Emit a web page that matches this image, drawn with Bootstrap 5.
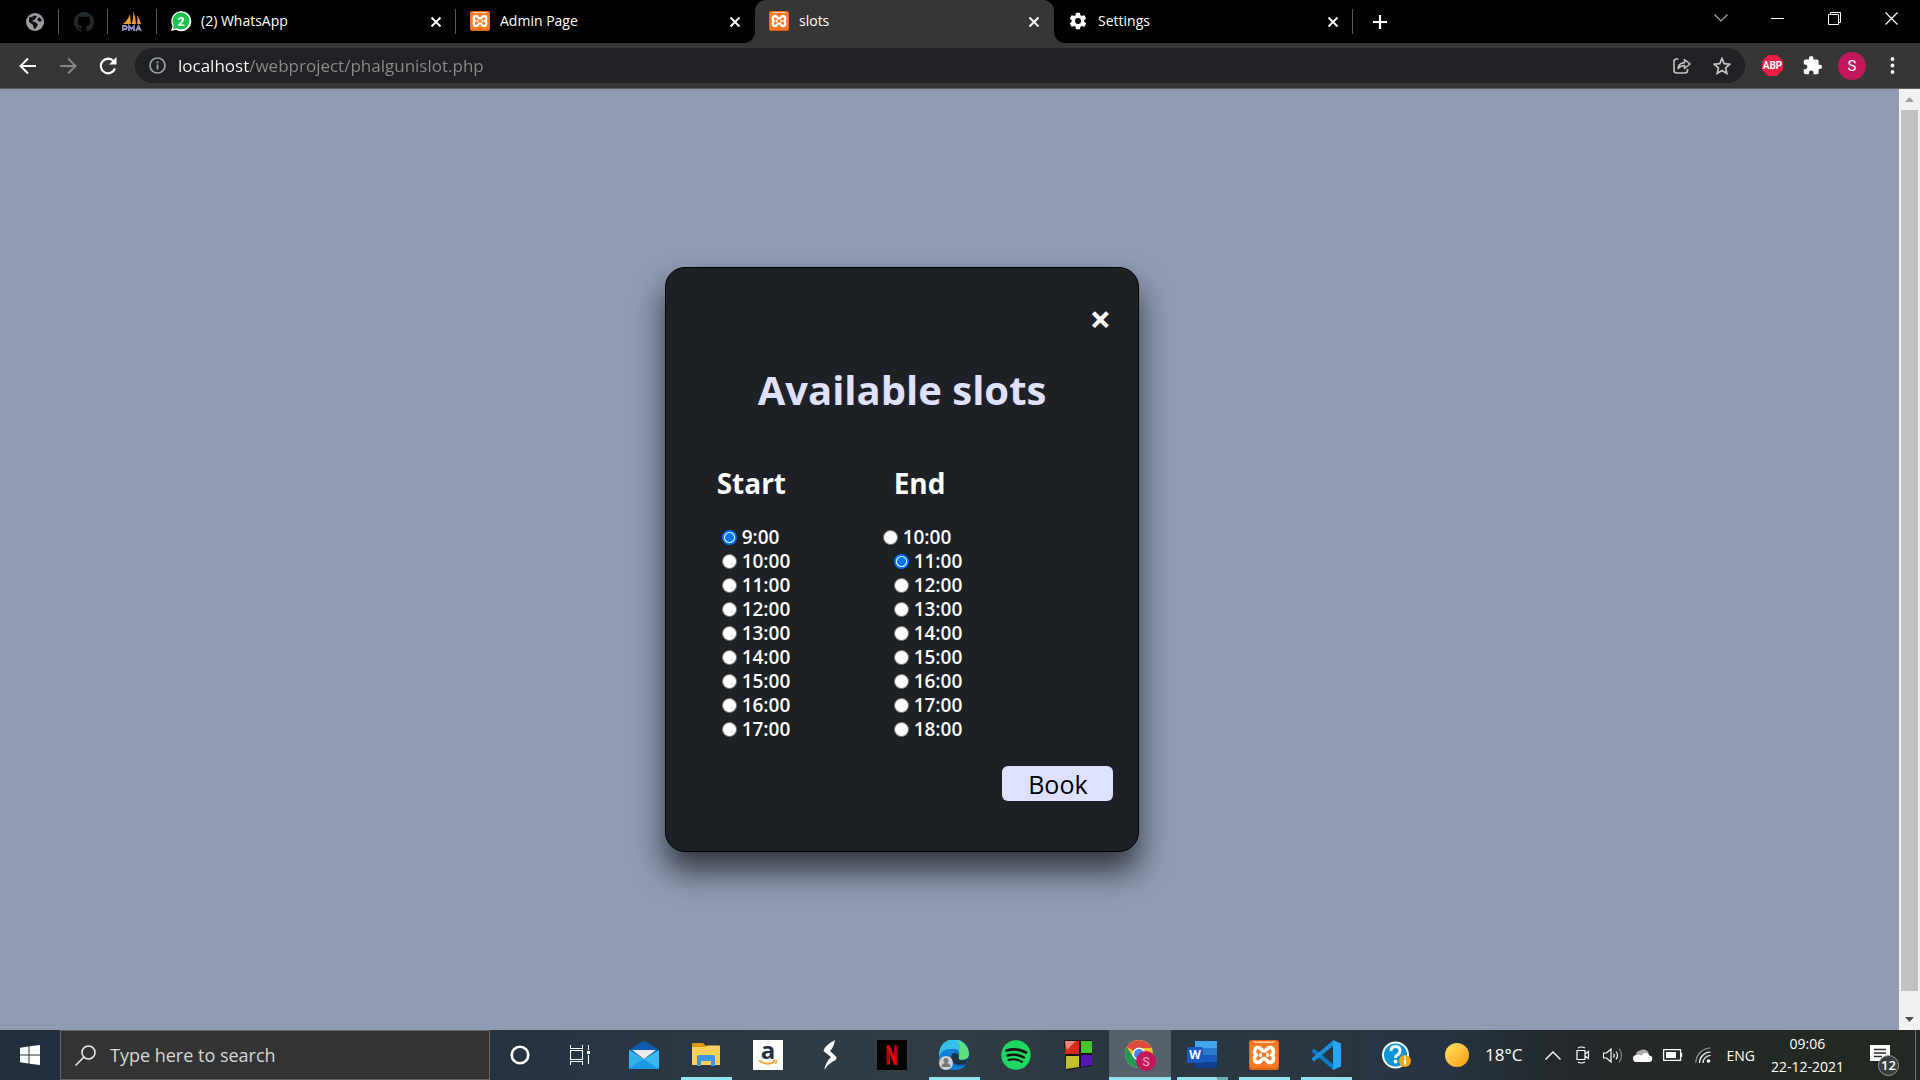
<!DOCTYPE html>
<html lang="en">
<head>
<meta charset="utf-8">
<meta name="viewport" content="width=device-width, initial-scale=1">
<title>slots</title>
<link href="https://cdn.jsdelivr.net/npm/bootstrap@5.3.0/dist/css/bootstrap.min.css" rel="stylesheet">
<style>
  body { font-family: "Open Sans", "Noto Sans", sans-serif; background: #8f9bb3; overflow: hidden; }
  button { border: 0; background: transparent; color: inherit; padding: 0; }
  svg { display: block; flex: none; }

  /* tab strip */
  .tabstrip { background: #000; height: 43px; color: #fff; font-size: 14px; }
  .tab-pin { width: 49px; height: 43px; }
  .tab-pin:first-child { width: 59px; padding-left: 10px; }
  .tab-sep { position: relative; }
  .tab-sep::after { content: ""; position: absolute; right: 0; top: 9px; width: 1px; height: 25px; background: #5a5a5a; }
  .tab-item { width: 299px; height: 43px; padding: 0 12px 0 14px; color: #fff; min-width: 120px; }
  .tab-item a { color: inherit; line-height: 20px; padding-bottom: 1px; gap: 10px; }
  .tab-on { background: #363636; border-radius: 11px 11px 0 0; }
  .tab-before { border-radius: 0 0 11px 0; background: #000; }
  .tab-after { border-radius: 0 0 0 11px; background: #000; }
  .strip-under { background: #363636; }
  .tab-x { width: 16px; height: 16px; }
  .tab-plus { width: 54px; height: 43px; }
  .win-btn { width: 57px; height: 36px; }

  /* toolbar */
  .toolbar { background: #363636; height: 46px; border-bottom: 1px solid #5d5d5d; color: #fff; padding: 0 8px; }
  .tool-btn { width: 40px; height: 40px; }
  .omnibox { background: #202124; border-radius: 18px; height: 35px; padding: 0 3px 0 14px; margin: 0 7px; gap: 12px; }
  .omnibox input { border: 0; outline: 0; font-size: 17px; line-height: 24px; color: #9a9a9a; padding: 0;
    background: linear-gradient(90deg, #fff 71px, #8c8c8c 71px); -webkit-background-clip: text; background-clip: text; -webkit-text-fill-color: transparent; }
  .avatar { width: 28px; height: 28px; background: #c2185b; font-family: Roboto, sans-serif; font-size: 15px; line-height: 28px; }

  /* page */
  .page-area { background: #8f9bb3; padding-top: 178px; }
  .slot-card { width: 25%; min-width: 470px; margin-left: 35%; background: #1d2024; border: 1px solid #000; border-radius: 20px;
    box-shadow: 0 19px 31px rgba(0,0,0,.65); color: #fff; padding: 30px 0 50px; }
  .slot-close { width: 40px; height: 40px; margin-right: 18px; font-size: 38px; line-height: 38px; font-weight: 700; }
  .slot-title { font-size: 40px; line-height: 48px; font-weight: 700; color: #dee1ff; margin: 28px 0 49px; }
  .slot-cols { padding-left: 51px; }
  .slot-col { width: 166px; }
  .slot-head { font-size: 28px; line-height: 40px; font-weight: 700; margin: 0 0 22px; }
  .slot-row { font-size: 19px; line-height: 24px; height: 24px; gap: 5px; font-weight: 600; }
  .in-5 { padding-left: 5px; }
  .in-11 { padding-left: 11px; }
  .slot-row input { appearance: none; width: 15px; height: 15px; border-radius: 50%; margin: 0; background: #fff; border: 1px solid #767676; flex: none; }
  .slot-row input:checked { border: 2px solid #0075ff; background: radial-gradient(circle, #0075ff 4px, #fff 5px); }
  .slot-book { width: 111px; height: 35px; margin: 25px 25px 0 0; background: #dee1ff; color: #000; border-radius: 6px; font-size: 25px; line-height: 32px; }

  /* scrollbar */
  .vbar { width: 21px; background: #f1f1f1; }
  .vbar-arrow { height: 21px; }
  .vbar-thumb { background: #c1c1c1; width: 17px; margin-bottom: 18px; }

  /* taskbar */
  .taskbar { height: 50px; color: #fff; background: linear-gradient(90deg, #22303d 0, #263442 27%, #2f3c45 44%, #313d45 50%, #293642 58%, #2b3741 66%, #263442 75%, #23292c 81%, #232925 88%, #222821 100%); }
  .task-cell { width: 62px; height: 50px; position: relative; }
  .task-60 { width: 60px; }
  .task-apps { padding-left: 3px; gap: 0; }
  .task-help { width: 80px; }
  .task-run::after { content: ""; position: absolute; left: 6px; right: 5px; bottom: 0; height: 3px; background: #91e3ee; }
  .task-on { background: #56626b; }
  .task-on::after { left: 0; right: 0; }
  .task-multi::after { background: linear-gradient(90deg, #91e3ee 40px, #6fa9b3 40px); }
  .task-search { width: 430px; height: 50px; background: #333; border: 1px solid #666; padding: 0 14px; gap: 14px; }
  .task-search input { border: 0; outline: 0; background: transparent; font-size: 18px; color: #fff; padding: 0; }
  .task-search input::placeholder { color: #d6d6d6; opacity: 1; }
  .tray-cell { width: 30px; height: 50px; }
  .tray-text { font-size: 14px; line-height: 23px; }
  .tray-clock { margin-right: 10px; }
  .tray-temp { font-size: 17px; }
  .note-count { position: absolute; left: 24px; top: 25px; width: 21px; height: 21px; border-radius: 50%; background: #3b3f3b; border: 1px solid #999; font-size: 13px; line-height: 19px; font-weight: 600; }
</style>
<script src="https://cdn.jsdelivr.net/npm/bootstrap@5.3.0/dist/js/bootstrap.bundle.min.js"></script>
</head>
<body class="vh-100 d-flex flex-column">

<svg width="0" height="0" class="position-absolute" aria-hidden="true">
  <defs>
    <symbol id="xampp" viewBox="0 0 30 30">
      <rect width="30" height="30" rx="3" fill="#e8641b"/><rect x="1" y="1" width="28" height="27" rx="3" fill="#fb7a24"/><path d="M4 1.500h22l-2 1.500H6z" fill="#ffd0a8"/>
      <path d="M9 7.500c-4 0-4.500 6-1.500 7.500-3 1.500-2.500 7.500 1.500 7.500 3.500 0 3-4 6-4s2.500 4 6 4c4 0 4.500-6 1.500-7.500 3-1.500 2.500-7.500-1.500-7.500-3 0-3 3.500-6 3.500s-3-3.500-6-3.500z" fill="none" stroke="#fff" stroke-width="3.600" stroke-linejoin="round"/>
      <path d="M11.500 13v4M18.500 13v4" stroke="#fff" stroke-width="2.600"/>
    </symbol>
    <symbol id="cross" viewBox="0 0 16 16"><path d="M3.500 3.500l9 9M12.500 3.500l-9 9" stroke="#fff" stroke-width="1.900"/></symbol>
  </defs>
</svg>

<header>
  <nav class="strip-under" aria-label="Tabs">
    <div class="d-flex">
      <div class="tabstrip tab-before d-flex">
        <a href="#" class="tab-pin tab-sep d-flex align-items-center justify-content-center" aria-label="Web page"><svg width="18" height="18" viewBox="0 0 18 18"><circle cx="9" cy="9" r="9" fill="#9aa0a6"/><path d="M3 4.500c2-1 3 0 5-2l3 .5-2 3.500-3 1.500 4 1.500 2 2-2 3.500-2 1-1-4-4-3z" fill="#111"/><path d="M13 4l3 3-2 2-3-2z" fill="#111"/></svg></a>
        <a href="#" class="tab-pin tab-sep d-flex align-items-center justify-content-center" aria-label="GitHub"><svg width="20" height="20" viewBox="0 0 16 16"><path fill="#24292e" d="M8 0C3.580 0 0 3.580 0 8c0 3.540 2.290 6.530 5.470 7.590.4.070.55-.17.55-.38v-1.490c-2.010.37-2.530-.49-2.690-.94-.09-.23-.48-.94-.82-1.130-.28-.15-.68-.52-.01-.53.63-.01 1.080.58 1.230.82.72 1.210 1.870.87 2.330.66.07-.52.28-.87.51-1.070-1.780-.2-3.640-.89-3.640-3.950 0-.87.310-1.590.82-2.150-.08-.2-.36-1.020.08-2.120 0 0 .67-.21 2.200.82a7.600 7.600 0 0 1 4 0c1.530-1.040 2.200-.82 2.200-.82.44 1.100.16 1.920.08 2.120.51.56.82 1.270.82 2.150 0 3.070-1.870 3.750-3.650 3.950.29.25.54.73.54 1.480v2.200c0 .21.15.46.55.38A8 8 0 0 0 16 8c0-4.420-3.580-8-8-8z"/></svg></a>
        <a href="#" class="tab-pin tab-sep d-flex align-items-center justify-content-center" aria-label="phpMyAdmin"><svg width="21" height="21" viewBox="0 0 21 21"><path d="M1 13Q6 9 8 3l1 10zM9.500 13Q12 7 11 0q3 6 3 13zM15 13q1-4 0-9 3 4 4 9z" fill="#f29a2e"/><path d="M1 20v-5h3q2 1 0 3H2m5 2v-5l2.500 3 2.500-3v5m2 0l2.500-5 2.500 5m-4-2h3" fill="none" stroke="#8d8fbd" stroke-width="1.800"/></svg></a>
        <div class="tab-item tab-sep d-flex align-items-center justify-content-between">
          <a href="#" class="d-flex align-items-center text-decoration-none"><svg class="overflow-visible" width="20" height="20" viewBox="0 0 20 20"><path d="M0 20l1.500-5A10 10 0 1 1 5 18.700z" fill="#fff"/><circle cx="10" cy="10" r="8.500" fill="#1bc34c"/><path d="M2 18l1-5 4 4z" fill="#1bc34c"/><text x="10" y="14.500" text-anchor="middle" font-family="Roboto, sans-serif" font-weight="700" font-size="12" fill="#fff">2</text></svg><span>(2) WhatsApp</span></a>
          <button class="tab-x" type="button" aria-label="Close tab"><svg width="16" height="16"><use href="#cross"/></svg></button>
        </div>
        <div class="tab-item d-flex align-items-center justify-content-between">
          <a href="#" class="d-flex align-items-center text-decoration-none"><svg width="20" height="20"><use href="#xampp"/></svg><span>Admin Page</span></a>
          <button class="tab-x" type="button" aria-label="Close tab"><svg width="16" height="16"><use href="#cross"/></svg></button>
        </div>
      </div>
      <div class="bg-black">
        <div class="tabstrip tab-item tab-on d-flex align-items-center justify-content-between">
          <a href="#" class="d-flex align-items-center text-decoration-none" aria-current="page"><svg width="20" height="20"><use href="#xampp"/></svg><span>slots</span></a>
          <button class="tab-x" type="button" aria-label="Close tab"><svg width="16" height="16"><use href="#cross"/></svg></button>
        </div>
      </div>
      <div class="tabstrip tab-after d-flex flex-grow-1">
        <div class="tab-item tab-sep d-flex align-items-center justify-content-between">
          <a href="#" class="d-flex align-items-center text-decoration-none"><svg width="20" height="20" viewBox="0 0 24 24"><path fill="#fff" d="M19.400 13a7.500 7.500 0 0 0 0-2l2.100-1.700a.5.5 0 0 0 .1-.6l-2-3.500a.5.5 0 0 0-.6-.2l-2.500 1a7.300 7.300 0 0 0-1.700-1l-.4-2.600a.5.5 0 0 0-.5-.4h-4a.5.5 0 0 0-.5.400L9.100 5a7.700 7.700 0 0 0-1.700 1l-2.500-1a.5.5 0 0 0-.6.200l-2 3.500a.5.5 0 0 0 .1.600L4.500 11a8 8 0 0 0 0 2l-2.100 1.700a.5.5 0 0 0-.1.600l2 3.500c.1.200.4.300.6.200l2.500-1c.5.400 1.100.700 1.700 1l.4 2.600c0 .2.200.4.500.4h4c.3 0 .5-.2.500-.4l.4-2.600a7.300 7.300 0 0 0 1.700-1l2.500 1c.2.100.5 0 .6-.2l2-3.500a.5.500 0 0 0-.1-.6zM12 15.500a3.500 3.500 0 1 1 0-7 3.500 3.500 0 0 1 0 7z"/></svg><span>Settings</span></a>
          <button class="tab-x" type="button" aria-label="Close tab"><svg width="16" height="16"><use href="#cross"/></svg></button>
        </div>
        <button class="tab-plus d-flex align-items-center justify-content-center" type="button" aria-label="New tab"><svg width="16" height="16" viewBox="0 0 16 16"><path d="M8 1v14M1 8h14" stroke="#fff" stroke-width="2.200"/></svg></button>
        <div class="d-flex ms-auto">
          <button class="win-btn d-flex align-items-center justify-content-center" type="button" aria-label="Search tabs"><svg width="14" height="8" viewBox="0 0 14 8"><path d="M.5.500L7 7 13.500.500" fill="none" stroke="#aaa" stroke-width="1.200"/></svg></button>
          <button class="win-btn d-flex align-items-center justify-content-center" type="button" aria-label="Minimize"><svg width="13" height="13"><path d="M0 6.500h13" stroke="#fff"/></svg></button>
          <button class="win-btn d-flex align-items-center justify-content-center" type="button" aria-label="Restore"><svg width="13" height="13"><path d="M.5 2.500h10v10H.5zM2.500 2.500v-2h10v10h-2" fill="none" stroke="#fff"/></svg></button>
          <button class="win-btn d-flex align-items-center justify-content-center" type="button" aria-label="Close window"><svg width="13" height="13"><path d="M.5.500l12 12M12.500.500l-12 12" stroke="#fff" stroke-width="1.200"/></svg></button>
        </div>
      </div>
    </div>
  </nav>

  <div class="toolbar d-flex align-items-center">
    <button class="tool-btn d-flex align-items-center justify-content-center" type="button" aria-label="Back"><svg width="18" height="18" viewBox="0 0 18 18"><path d="M17 9H2M9 1.500L1.500 9 9 16.500" fill="none" stroke="#fff" stroke-width="2"/></svg></button>
    <button class="tool-btn d-flex align-items-center justify-content-center" type="button" aria-label="Forward"><svg width="18" height="18" viewBox="0 0 18 18"><path d="M1 9h15M9 1.500L16.500 9 9 16.500" fill="none" stroke="#868686" stroke-width="2"/></svg></button>
    <button class="tool-btn d-flex align-items-center justify-content-center" type="button" aria-label="Reload"><svg width="18" height="18" viewBox="0 0 18 18"><path d="M16 11.500A7.300 7.300 0 1 1 14.500 4" fill="none" stroke="#fff" stroke-width="2.200"/><path d="M17.500 0v7.500H10z" fill="#fff"/></svg></button>
    <form class="omnibox d-flex align-items-center flex-grow-1">
      <svg width="17" height="17" viewBox="0 0 17 17"><circle cx="8.500" cy="8.500" r="7.500" fill="none" stroke="#9aa0a6" stroke-width="1.700"/><path d="M8.500 7.500v5M8.500 4.200v2" stroke="#9aa0a6" stroke-width="1.800"/></svg>
      <input class="flex-grow-1" id="url" type="text" aria-label="Address" value="localhost/webproject/phalgunislot.php">
      <div class="d-flex">
        <button class="tool-btn d-flex align-items-center justify-content-center" type="button" aria-label="Share"><svg width="18" height="18" viewBox="0 0 18 18"><path d="M5.500 2H3.500Q1 2 1 4.500v9Q1 16 3.500 16h8.500q2.500 0 2.500-2.500V12M5 11.500Q5.500 6 11.500 5.800V2.500L17 7l-5.500 4.500V8.500Q7.500 8.500 5 11.500z" fill="none" stroke="#c4c4c4" stroke-width="1.600" stroke-linejoin="round"/></svg></button>
        <button class="tool-btn d-flex align-items-center justify-content-center" type="button" aria-label="Bookmark"><svg width="18" height="18" viewBox="0 0 18 18"><path d="M9 1.500l2.200 5.200 5.600.5-4.200 3.700 1.200 5.500L9 13.500l-4.800 2.900 1.200-5.500L1.200 7.200l5.600-.5z" fill="none" stroke="#c4c4c4" stroke-width="1.700"/></svg></button>
      </div>
    </form>
    <button class="tool-btn d-flex align-items-center justify-content-center" type="button" aria-label="Adblock Plus"><svg width="21" height="21" viewBox="0 0 21 21"><path d="M6.200 0h8.600L21 6.200v8.600L14.800 21H6.200L0 14.800V6.200z" fill="#ed1e45"/><text x="10.500" y="14" text-anchor="middle" font-family="Roboto, sans-serif" font-size="10" font-weight="700" fill="#fff">ABP</text></svg></button>
    <button class="tool-btn d-flex align-items-center justify-content-center" type="button" aria-label="Extensions"><svg width="21" height="21" viewBox="0 0 24 24"><path fill="#fff" d="M20.500 11H19V7a2 2 0 0 0-2-2h-4V3.500a2.500 2.500 0 0 0-5 0V5H4a2 2 0 0 0-2 2v3.800h1.500a2.700 2.700 0 0 1 0 5.400H2V20a2 2 0 0 0 2 2h3.800v-1.500a2.700 2.700 0 0 1 5.400 0V22H17a2 2 0 0 0 2-2v-4h1.500a2.500 2.500 0 0 0 0-5z"/></svg></button>
    <button class="tool-btn d-flex align-items-center justify-content-center" type="button" aria-label="Profile"><span class="avatar rounded-circle d-block text-center">S</span></button>
    <button class="tool-btn d-flex align-items-center justify-content-center" type="button" aria-label="Menu"><svg width="5" height="17" viewBox="0 0 5 17"><g fill="#fff"><circle cx="2.500" cy="2" r="1.900"/><circle cx="2.500" cy="8.500" r="1.900"/><circle cx="2.500" cy="15" r="1.900"/></g></svg></button>
  </div>
</header>

<div class="d-flex flex-grow-1 overflow-hidden">
  <main class="page-area flex-grow-1">
    <form class="slot-card">
      <div class="d-flex justify-content-end"><button class="slot-close" type="button" aria-label="Close">×</button></div>
      <h1 class="slot-title text-center">Available slots</h1>
      <div class="slot-cols d-flex">
        <section class="slot-col">
          <h2 class="slot-head">Start</h2>
          <label class="slot-row in-5 d-flex align-items-center"><input type="radio" name="start" checked>9:00</label>
          <label class="slot-row in-5 d-flex align-items-center"><input type="radio" name="start">10:00</label>
          <label class="slot-row in-5 d-flex align-items-center"><input type="radio" name="start">11:00</label>
          <label class="slot-row in-5 d-flex align-items-center"><input type="radio" name="start">12:00</label>
          <label class="slot-row in-5 d-flex align-items-center"><input type="radio" name="start">13:00</label>
          <label class="slot-row in-5 d-flex align-items-center"><input type="radio" name="start">14:00</label>
          <label class="slot-row in-5 d-flex align-items-center"><input type="radio" name="start">15:00</label>
          <label class="slot-row in-5 d-flex align-items-center"><input type="radio" name="start">16:00</label>
          <label class="slot-row in-5 d-flex align-items-center"><input type="radio" name="start">17:00</label>
        </section>
        <section class="slot-col">
          <h2 class="slot-head in-11">End</h2>
          <label class="slot-row d-flex align-items-center"><input type="radio" name="end">10:00</label>
          <label class="slot-row in-11 d-flex align-items-center"><input type="radio" name="end" checked>11:00</label>
          <label class="slot-row in-11 d-flex align-items-center"><input type="radio" name="end">12:00</label>
          <label class="slot-row in-11 d-flex align-items-center"><input type="radio" name="end">13:00</label>
          <label class="slot-row in-11 d-flex align-items-center"><input type="radio" name="end">14:00</label>
          <label class="slot-row in-11 d-flex align-items-center"><input type="radio" name="end">15:00</label>
          <label class="slot-row in-11 d-flex align-items-center"><input type="radio" name="end">16:00</label>
          <label class="slot-row in-11 d-flex align-items-center"><input type="radio" name="end">17:00</label>
          <label class="slot-row in-11 d-flex align-items-center"><input type="radio" name="end">18:00</label>
        </section>
      </div>
      <div class="d-flex justify-content-end"><button class="slot-book" type="submit">Book</button></div>
    </form>
  </main>
  <div class="vbar d-flex flex-column align-items-center" aria-hidden="true">
    <div class="vbar-arrow d-flex align-items-center"><svg width="9" height="5"><path d="M0 5L4.500 0 9 5z" fill="#a3a3a3"/></svg></div>
    <div class="vbar-thumb flex-grow-1"></div>
    <div class="vbar-arrow d-flex align-items-center"><svg width="9" height="5"><path d="M0 0L4.500 5 9 0z" fill="#505050"/></svg></div>
  </div>
</div>

<footer class="taskbar d-flex">
  <button class="task-cell task-60 d-flex align-items-center justify-content-center" type="button" aria-label="Start menu"><svg width="20" height="20" viewBox="0 0 20 20"><path d="M0 2.800L8.500 1.500V9.500H0zM9.500 1.300L20 0v9.500H9.500zM0 10.500h8.500v8L0 17.300zM9.500 10.500H20V20L9.500 18.700z" fill="#fff"/></svg></button>
  <form class="task-search d-flex align-items-center">
    <svg width="21" height="21" viewBox="0 0 21 21"><circle cx="13.500" cy="7.500" r="6.500" fill="none" stroke="#eee" stroke-width="1.500"/><path d="M9 12L.5 20.500" stroke="#eee" stroke-width="1.500"/></svg>
    <input class="flex-grow-1" type="search" aria-label="Search" placeholder="Type here to search">
  </form>
  <button class="task-cell task-60 d-flex align-items-center justify-content-center" type="button" aria-label="Cortana"><svg width="20" height="20"><circle cx="10" cy="10" r="8.300" fill="none" stroke="#fff" stroke-width="2.600"/></svg></button>
  <button class="task-cell task-60 d-flex align-items-center justify-content-center" type="button" aria-label="Task view"><svg width="20" height="20" viewBox="0 0 20 20"><path d="M.5 5.500h12v9H.5zM.5 0v3.500h12V0M.5 20v-3.500h12V20M18.500 0v5M18.500 10v9" fill="none" stroke="#fff" stroke-width="1.100"/><path d="M17 6h3v3h-3z" fill="#fff"/></svg></button>
  <div class="task-apps d-flex">
    <button class="task-cell d-flex align-items-center justify-content-center" type="button" aria-label="Mail"><svg width="30" height="28" viewBox="0 0 30 28"><path d="M0 9L13 .8q2-1.200 4 0L30 9v5H0z" fill="#0b5cad"/><path d="M0 9l15 9L30 9v19H0z" fill="#35b9f1"/><path d="M3 9h24l-12 9z" fill="#ececec"/><path d="M0 9l30 19H0z" fill="#1f97e4"/><path d="M0 9l15 9-15 9z" fill="#30b2ee"/></svg></button>
    <button class="task-cell task-run d-flex align-items-center justify-content-center" type="button" aria-label="File Explorer"><svg width="28" height="24" viewBox="0 0 28 24"><path d="M0 1q0-1 1-1h10l3 3v5H0z" fill="#dc9a08"/><path d="M0 4h13l2-1.500h12q1 0 1 1V22H0z" fill="#fdd05a"/><path d="M5 23V14q0-2 2-2h14q2 0 2 2v9h-4v-5H9v5z" fill="#3e97dc"/></svg></button>
    <button class="task-cell d-flex align-items-center justify-content-center" type="button" aria-label="Amazon"><svg class="overflow-visible" width="30" height="30" viewBox="0 0 30 30"><path d="M0 0h30v30H0z" fill="#fff"/><text x="15" y="19" text-anchor="middle" font-family="Open Sans, sans-serif" font-weight="700" font-size="24" fill="#232f3e">a</text><path d="M6 20.500q8.500 6 16 1" fill="none" stroke="#f5a12c" stroke-width="1.800"/><path d="M20 20.500q4-1 3.500.5 0 1.500-1 3" fill="none" stroke="#f5a12c" stroke-width="1.300"/></svg></button>
    <button class="task-cell d-flex align-items-center justify-content-center" type="button" aria-label="Stocks"><svg width="14" height="30" viewBox="0 0 14 30"><path d="M12 0Q1 6 .5 11l7.500 6q-6 6-6.500 13 3-6 11-10 2-2 0-4L7 11q4-4 5-11z" fill="#fff"/></svg></button>
    <button class="task-cell d-flex align-items-center justify-content-center" type="button" aria-label="Netflix"><svg width="30" height="30" viewBox="0 0 30 30"><path d="M0 0h30v30H0z"/><path d="M9.500 5.500h3.500v19l-3.500.5zM17 5.500h3.500V25l-3.500-.5z" fill="#b1060f"/><path d="M9.500 5.500H13L20.500 25l-3.500-.5z" fill="#e50914"/></svg></button>
    <button class="task-cell task-run d-flex align-items-center justify-content-center" type="button" aria-label="Edge"><svg width="30" height="30" viewBox="0 0 30 30"><circle cx="15" cy="15" r="15" fill="#0c59a4"/><path d="M0 15A15 15 0 0 1 30 13q0 7-7 7-5 0-3-4 1-7-6-7Q4 9 0 17z" fill="#35c1e6"/><path d="M17 .2A15 15 0 0 1 30 13q0 7-7 7-5 0-3-4 1-2 0-4Q24 6 17 .2z" fill="#5ee07c"/><path d="M0 17Q3 8 12 9q7 0 8 6-2-3-5-2-5 2-2 9 3 5 10 4l4-1Q21 31 13 30 0 28 0 17z" fill="#1080d5"/><path d="M13 14q4-3 7 2-2 4 3 4 4 0 6-2-1 4-3 6-10 2-13-3-2-3 0-7z" fill="#1d3444"/><circle cx="7" cy="23" r="7" fill="#d1d1cf"/><circle cx="7" cy="20.500" r="2.500" fill="#777"/><path d="M2.500 27q0-4 4.500-4t4.500 4z" fill="#777"/></svg></button>
    <button class="task-cell d-flex align-items-center justify-content-center" type="button" aria-label="Spotify"><svg width="30" height="30" viewBox="0 0 30 30"><circle cx="15" cy="15" r="14.700" fill="#1ed760"/><path d="M5.500 10.500Q16 7.500 25 12.500" fill="none" stroke="#111" stroke-width="2.800" stroke-linecap="round"/><path d="M6.500 15.500q9-2.500 16.500 2" fill="none" stroke="#111" stroke-width="2.400" stroke-linecap="round"/><path d="M7.500 20q7.500-2 13.500 2" fill="none" stroke="#111" stroke-width="2" stroke-linecap="round"/></svg></button>
    <button class="task-cell d-flex align-items-center justify-content-center" type="button" aria-label="Media tiles"><svg width="28" height="30" viewBox="0 0 28 30"><path d="M0 0h28v26L2 30z" fill="#111"/><path d="M1 1h14v13H1z" fill="#d9271c"/><path d="M17 1h11v12H17z" fill="#46c62c"/><path d="M2 16h13v11L2 29z" fill="#c3c22c"/><path d="M17 15h11v10l-11 2z" fill="#5416b8"/><path d="M1 1h11L3 10z" fill="#f0847c"/></svg></button>
    <button class="task-cell task-run task-on d-flex align-items-center justify-content-center" type="button" aria-label="Chrome"><svg width="32" height="32" viewBox="0 0 32 32"><circle cx="15" cy="15" r="14" fill="#fbc02d"/><path d="M15 15L2.900 8A14 14 0 0 1 27.500 9H15z" fill="#dd4b3e"/><path d="M2.900 8A14 14 0 0 0 15 29l5-9-11-2z" fill="#1e9b57"/><circle cx="15" cy="15" r="6.500" fill="#fff"/><circle cx="15" cy="15" r="5" fill="#4587f3"/><circle cx="22" cy="22" r="10" fill="#c2185b"/><text x="22" y="26.500" text-anchor="middle" font-family="Roboto, sans-serif" font-size="12" fill="#f3b8cf">S</text></svg></button>
    <button class="task-cell task-run task-multi d-flex align-items-center justify-content-center" type="button" aria-label="Word"><svg width="30" height="28" viewBox="0 0 30 28"><path d="M8 0h22v7H8z" fill="#41a5ee"/><path d="M8 7h22v7H8z" fill="#2b7cd3"/><path d="M8 14h22v7H8z" fill="#185abd"/><path d="M8 21h22v6H8z" fill="#103f91"/><rect y="6" width="16" height="16" rx="1.500" fill="#185abd"/><text x="8" y="18" text-anchor="middle" font-family="Open Sans, sans-serif" font-weight="700" font-size="12" fill="#fff">W</text></svg></button>
    <button class="task-cell task-run d-flex align-items-center justify-content-center" type="button" aria-label="XAMPP"><svg width="30" height="30"><use href="#xampp"/></svg></button>
    <button class="task-cell task-run d-flex align-items-center justify-content-center" type="button" aria-label="Visual Studio Code"><svg width="30" height="30" viewBox="0 0 30 30"><path d="M3 8.500L22 24v5.500L1 12l0-1.500z" fill="#0a7bc4"/><path d="M3 21.500L22 6V.5L1 18v1.500z" fill="#1a8fd8"/><path d="M22 0l8 3.500v23L22 30z" fill="#2aa5f4"/></svg></button>
    <button class="task-cell task-help d-flex align-items-center justify-content-center" type="button" aria-label="Help"><svg width="30" height="28" viewBox="0 0 30 28"><circle cx="13.500" cy="14" r="13.500" fill="#fff"/><circle cx="13.500" cy="14" r="11.500" fill="#0a95d6"/><path d="M9 10q0-4.500 4.500-4.500T18 10q0 2.500-2.500 3.800-2 1-2 3.200" fill="none" stroke="#fff" stroke-width="3"/><circle cx="13.500" cy="20.500" r="1.900" fill="#fff"/><circle cx="23" cy="20" r="6" fill="#f4a51c"/><path d="M23 18.500v5M23 15.800v1.600" stroke="#fff" stroke-width="2"/></svg></button>
  </div>

  <div class="d-flex align-items-center ms-auto">
    <button class="d-flex align-items-center me-3" type="button" aria-label="Weather, 18°C"><svg class="me-3" width="24" height="24" viewBox="0 0 24 24"><defs><linearGradient id="sun" x1="0" y1="0" x2="1" y2="1"><stop offset="0" stop-color="#ffe36b"/><stop offset="1" stop-color="#ff9c0c"/></linearGradient></defs><circle cx="12" cy="12" r="12" fill="url(#sun)"/></svg><span class="tray-temp">18°C</span></button>
    <button class="tray-cell d-flex align-items-center justify-content-center" type="button" aria-label="Show hidden icons"><svg width="16" height="9" viewBox="0 0 16 9"><path d="M.5 8.500L8 1l7.500 7.500" fill="none" stroke="#fff" stroke-width="1.400"/></svg></button>
    <button class="tray-cell d-flex align-items-center justify-content-center" type="button" aria-label="Meet now"><svg width="16" height="18" viewBox="0 0 16 18"><path d="M2 4.500h8v9H2zM10 8l3.500-2.500v7L10 10M3 2q3.500-2 7 0M3 16q3.500 2 7 0" fill="none" stroke="#fff" stroke-width="1.200"/></svg></button>
    <button class="tray-cell d-flex align-items-center justify-content-center" type="button" aria-label="Volume"><svg width="20" height="17" viewBox="0 0 20 17"><path d="M.5 6h3L8 2v13l-4.500-4h-3zM10.500 6.500q1.500 2 0 4M13 4.500q3 4 0 8" fill="none" stroke="#fff" stroke-width="1.200"/><path d="M16 1.500q5 7 0 14" fill="none" stroke="#888" stroke-width="1.200"/></svg></button>
    <button class="tray-cell d-flex align-items-center justify-content-center" type="button" aria-label="OneDrive"><svg width="20" height="14" viewBox="0 0 20 14"><path d="M3 8a5 5 0 0 1 4-5.500 6 6 0 0 1 9 3L10 10z" fill="#aaa"/><path d="M3.500 14a3.500 3.500 0 0 1 0-7q3-.500 5 .5 3-4 7-1.500l1 1.500a3.300 3.300 0 0 1 0 6.500z" fill="#fff"/></svg></button>
    <button class="tray-cell d-flex align-items-center justify-content-center" type="button" aria-label="Battery"><svg width="20" height="12" viewBox="0 0 20 12"><path d="M.6.600h17v10.800H.6zM18.500 4v4" fill="none" stroke="#fff" stroke-width="1.300"/><path d="M3 3h10v6H3z" fill="#fff"/></svg></button>
    <button class="tray-cell d-flex align-items-center justify-content-center" type="button" aria-label="Wi-Fi"><svg width="17" height="17" viewBox="0 0 17 17"><path d="M.8 16A15 15 0 0 1 15.500 1" fill="none" stroke="#999" stroke-width="1.200"/><path d="M4.500 16A11 11 0 0 1 15.500 5M8 16a7.500 7.500 0 0 1 7.500-7.500" fill="none" stroke="#fff" stroke-width="1.200"/><circle cx="13.500" cy="14" r="1.800" fill="#fff"/></svg></button>
    <button class="tray-text px-2 me-2" type="button">ENG</button>
    <button class="tray-text tray-clock text-center" type="button">09:06<br>22-12-2021</button>
    <button class="task-cell border-end border-secondary me-1 text-start ps-3" type="button" aria-label="12 notifications"><svg width="20" height="20" viewBox="0 0 20 20"><path d="M0 0h20v16h-7v4l-4-4H0z" fill="#fff"/><path d="M4 4.500h12M4 8h12M4 11.500h8" stroke="#2a2e2a" stroke-width="1.300"/></svg><span class="note-count text-center">12</span></button>
  </div>
</footer>
</body>
</html>
